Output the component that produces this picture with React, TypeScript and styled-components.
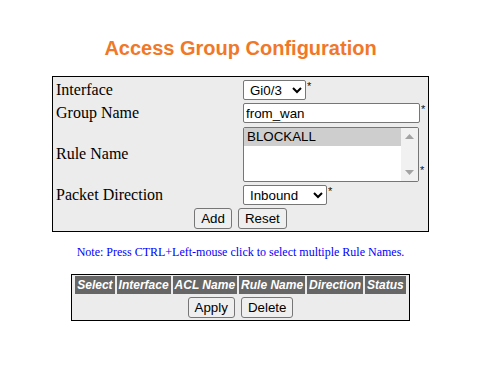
import React from "react";
import styled, { createGlobalStyle } from "styled-components";

const Global = createGlobalStyle`
  html, body { margin: 0; padding: 0; background: #fff; }
  body { font-family: "Liberation Sans", Arial, sans-serif; }
`;

const Page = styled.div`
  width: 481px;
  display: flex;
  flex-direction: column;
  align-items: center;
  padding-top: 36px;
`;

const Title = styled.h1`
  margin: 0 0 16px;
  font: 700 20px/24px "Liberation Sans", Arial, sans-serif;
  color: #f07828;
`;

const Panel = styled.div`
  box-sizing: border-box;
  width: 377px;
  border: 1px solid #000;
  background: #ececec;
  display: grid;
  grid-template-columns: 190px 1fr;
  row-gap: 3px;
  padding: 3px 0 2px;
`;

const Label = styled.div`
  display: flex;
  align-items: center;
  padding-left: 3px;
  font: 16px "Liberation Serif", "Times New Roman", serif;
  color: #000;
`;

const Field = styled.div<{ $offset?: number }>`
  display: flex;
  align-items: flex-start;
  margin-top: ${(p) => p.$offset ?? 0}px;
`;

const Star = styled.span<{ $bottom?: boolean }>`
  font: 11px/11px "Liberation Sans", Arial, sans-serif;
  color: #111;
  margin-left: 1px;
  align-self: ${(p) => (p.$bottom ? "flex-end" : "flex-start")};
  margin-top: ${(p) => (p.$bottom ? 0 : 1)}px;
  margin-bottom: ${(p) => (p.$bottom ? 6 : 0)}px;
`;

const Select = styled.select<{ $w: number }>`
  box-sizing: border-box;
  width: ${(p) => p.$w}px;
  height: 20px;
  font: 13.33px "Liberation Sans", Arial, sans-serif;
  color: #000;
  background: #fff;
  border: 1px solid #767676;
  border-radius: 2px;
  padding: 0 0 0 2px;
  margin: 0;
`;

const TextInput = styled.input`
  box-sizing: border-box;
  width: 177px;
  height: 20px;
  font: 13.33px "Liberation Sans", Arial, sans-serif;
  color: #000;
  background: #fff;
  border: 1px solid #767676;
  border-radius: 2px;
  padding: 1px 2px;
  margin: 0;
  outline: none;
`;

const ListBox = styled.div`
  box-sizing: border-box;
  width: 176px;
  height: 55px;
  border: 1px solid #767676;
  border-radius: 2px;
  background: #fff;
  display: flex;
  overflow: hidden;
`;

const Options = styled.div`
  flex: 1;
  display: flex;
  flex-direction: column;
`;

const Option = styled.div<{ $selected?: boolean }>`
  height: 18px;
  line-height: 18px;
  padding-left: 3px;
  font: 13.33px/18px "Liberation Sans", Arial, sans-serif;
  color: #000;
  background: ${(p) => (p.$selected ? "#cecece" : "transparent")};
`;

const ScrollTrack = styled.div`
  width: 17px;
  background: #f1f1f1;
  display: flex;
  flex-direction: column;
  justify-content: space-between;
  align-items: center;
  padding: 6px 0;
`;

const ButtonRow = styled.div<{ $gap: number }>`
  grid-column: 1 / -1;
  display: flex;
  justify-content: center;
  gap: ${(p) => p.$gap}px;
`;

const Button = styled.button`
  box-sizing: border-box;
  height: 21px;
  font: 13.33px/15px "Liberation Sans", Arial, sans-serif;
  color: #000;
  background: #efefef;
  border: 1px solid #767676;
  border-radius: 3px;
  padding: 2px 6px;
  margin: 0;
`;

const Note = styled.div`
  margin-top: 13px;
  font: 12px/14px "Liberation Serif", "Times New Roman", serif;
  color: #0000ff;
`;

const ListTable = styled.div`
  margin-top: 15px;
  border: 1px solid #000;
  background: #ececec;
  padding: 1px 3px 2px;
  display: flex;
  flex-direction: column;
  gap: 3px;
`;

const HeaderRow = styled.div`
  display: flex;
  gap: 2px;
`;

const HeaderCell = styled.div`
  height: 18px;
  padding: 0 2px;
  background: #666;
  color: #fff;
  font: italic 700 12px/18px "Liberation Sans", Arial, sans-serif;
  white-space: nowrap;
`;

const Arrow = ({ up }: { up?: boolean }) => (
  <svg width="9" height="5" viewBox="0 0 9 5">
    <path d={up ? "M0 5 L4.5 0 L9 5 Z" : "M0 0 L4.5 5 L9 0 Z"} fill="#a3a3a3" />
  </svg>
);

export default function App() {
  return (
    <>
      <Global />
      <Page>
        <Title>Access Group Configuration</Title>
        <Panel>
          <Label>Interface</Label>
          <Field>
            <Select $w={63} defaultValue="Gi0/3">
              <option>Gi0/3</option>
            </Select>
            <Star>*</Star>
          </Field>

          <Label>Group Name</Label>
          <Field>
            <TextInput defaultValue="from_wan" />
            <Star>*</Star>
          </Field>

          <Label>Rule Name</Label>
          <Field $offset={1}>
            <ListBox role="listbox">
              <Options>
                <Option $selected>BLOCKALL</Option>
              </Options>
              <ScrollTrack>
                <Arrow up />
                <Arrow />
              </ScrollTrack>
            </ListBox>
            <Star $bottom>*</Star>
          </Field>

          <Label>Packet Direction</Label>
          <Field>
            <Select $w={84} defaultValue="Inbound">
              <option>Inbound</option>
              <option>Outbound</option>
            </Select>
            <Star>*</Star>
          </Field>

          <ButtonRow $gap={6}>
            <Button>Add</Button>
            <Button>Reset</Button>
          </ButtonRow>
        </Panel>

        <Note>Note: Press CTRL+Left-mouse click to select multiple Rule Names.</Note>

        <ListTable>
          <HeaderRow>
            {["Select", "Interface", "ACL Name", "Rule Name", "Direction", "Status"].map((h) => (
              <HeaderCell key={h}>{h}</HeaderCell>
            ))}
          </HeaderRow>
          <ButtonRow $gap={6}>
            <Button>Apply</Button>
            <Button>Delete</Button>
          </ButtonRow>
        </ListTable>
      </Page>
    </>
  );
}
